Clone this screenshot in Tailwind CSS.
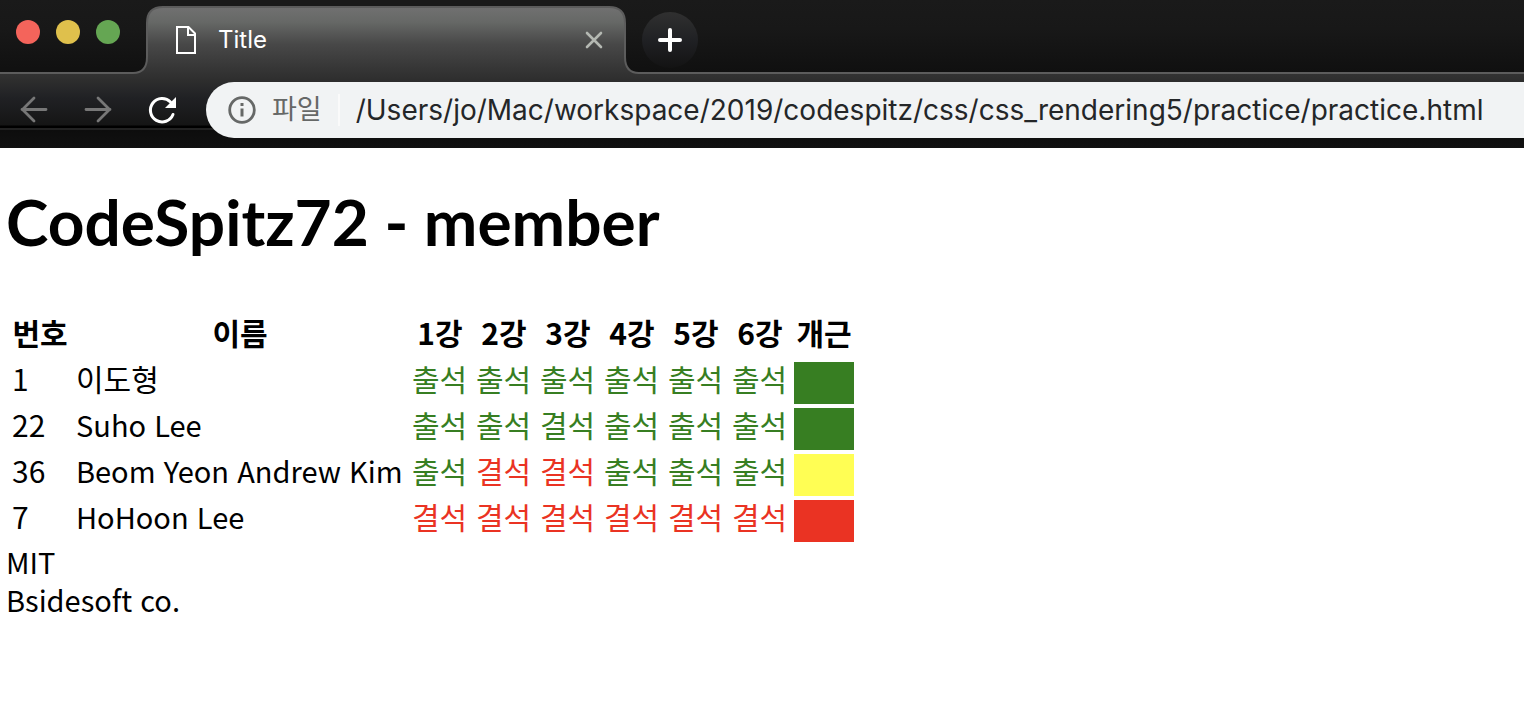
<!DOCTYPE html>
<html lang="ko">
<head>
<meta charset="utf-8">
<meta name="viewport" content="width=device-width, initial-scale=1">
<title>Title</title>
<script src="https://cdn.jsdelivr.net/npm/@tailwindcss/browser@4"></script>
</head>
<body class="min-h-screen overflow-x-hidden bg-white text-black font-['Noto_Sans_CJK_KR','Noto_Sans',sans-serif]">
<header class="relative isolate overflow-hidden bg-[linear-gradient(to_bottom,#707070_8px,#666866_22px,#484848_44px,#363636_68px,#2e2e2e_80px,#202124_98px,#151515_125px,#000_126px,#000_128px,#222_128px,#222_130px,#0d0d0d_130px,#111_148px)] font-[Inter,'Noto_Sans_CJK_KR',sans-serif]">
  <!-- Outline of the tab strip -->
  <div class="absolute inset-x-0 top-0 -z-10 flex h-[74px]" aria-hidden="true">
    <svg class="h-[74px] w-[172px] shrink-0" viewBox="0 0 172 74">
      <defs><linearGradient id="strip" x1="0" y1="0" x2="0" y2="74" gradientUnits="userSpaceOnUse"><stop stop-color="#1a1a1a"/><stop offset=".4" stop-color="#181818"/><stop offset="1" stop-color="#101010"/></linearGradient></defs>
      <path d="M0 0H172V7H163Q147 7 147 23V57Q147 73 133 73H0Z" fill="url(#strip)"/>
      <path d="M0 73H133Q147 73 147 57V23Q147 7 163 7H172" fill="none" stroke="#5c5c5c" stroke-width="2"/>
    </svg>
    <div class="h-2 w-[428px] shrink-0 border-b-2 border-[#5c5c5c] bg-[#1a1a1a]"></div>
    <svg class="h-[74px] w-[50px] shrink-0" viewBox="0 0 50 74">
      <path d="M0 0H50V73H39Q25 73 25 57V23Q25 7 9 7H0Z" fill="url(#strip)"/>
      <path d="M0 7H9Q25 7 25 23V57Q25 73 39 73H50" fill="none" stroke="#5c5c5c" stroke-width="2"/>
    </svg>
    <div class="h-[74px] flex-1 border-b-2 border-[#5c5c5c] bg-[linear-gradient(to_bottom,#1a1a1a,#181818_40%,#101010)]"></div>
  </div>

  <div class="flex h-[74px] items-start">
    <div class="flex w-[148px] shrink-0 gap-4 pt-5 pl-4">
      <button class="size-6 rounded-full bg-[#f4645b]" aria-label="Close window"></button>
      <button class="size-6 rounded-full bg-[#dfc04c]" aria-label="Minimize"></button>
      <button class="size-6 rounded-full bg-[#65a653]" aria-label="Zoom"></button>
    </div>
    <div class="flex w-[478px] shrink-0 items-center pt-5 pr-5 pl-7">
      <svg class="h-10 w-5 shrink-0" viewBox="0 0 20 40" fill="none" stroke="#fff" stroke-width="2"><path d="M1 7H12.500L19 13.500V33H1Z"/><path d="M12 7V15H19"/></svg>
      <span class="ml-[22px] flex-1 text-2xl leading-10 text-white">Title</span>
      <button class="flex size-6 items-center justify-center" aria-label="Close tab">
        <svg class="size-5" viewBox="0 0 20 20" stroke="#b4b8b2" stroke-width="2.600" stroke-linecap="round"><path d="M3 3L17 17M17 3L3 17"/></svg>
      </button>
    </div>
    <button class="mt-3 ml-4 flex size-14 items-center justify-center rounded-full bg-[linear-gradient(to_bottom,#303030,#202124_50%,#131313)]" aria-label="New tab">
      <svg class="size-6" viewBox="0 0 24 24" stroke="#fff" stroke-width="4" stroke-linecap="round"><path d="M12 2V22M2 12H22"/></svg>
    </button>
  </div>

  <div class="flex h-[74px] items-start pt-2">
    <nav class="flex h-14 w-[206px] shrink-0 items-center gap-8 pl-[18px]">
      <button class="size-8" aria-label="Back"><svg class="size-8" viewBox="0 0 32 32" fill="none" stroke="#777" stroke-width="2.800" stroke-linecap="round"><path d="M28 15.500H4M16 4L4.500 15.500L16 27"/></svg></button>
      <button class="size-8" aria-label="Forward"><svg class="size-8" viewBox="0 0 32 32" fill="none" stroke="#777" stroke-width="2.800" stroke-linecap="round"><path d="M4 15.500H28M16 4L27.500 15.500L16 27"/></svg></button>
      <button class="size-8" aria-label="Reload"><svg class="size-8" viewBox="0 0 32 32" fill="none"><path d="M27 20.500A11.700 11.700 0 1 1 24.500 8" stroke="#fff" stroke-width="3" stroke-linecap="round"/><path d="M30 3V14H19Z" fill="#fff"/></svg></button>
    </nav>
    <div class="flex h-14 min-w-0 flex-1 items-center rounded-l-full bg-[#f1f3f4] pl-[22px]">
      <svg class="size-7 shrink-0" viewBox="0 0 28 28" fill="none"><circle cx="14" cy="14" r="12.300" stroke="#666867" stroke-width="2.800"/><path d="M14 12.500V20.500" stroke="#666867" stroke-width="3"/><path d="M14 7V10" stroke="#666867" stroke-width="3"/></svg>
      <label for="address" class="ml-4 shrink-0 text-[27px] leading-8 text-[#666867]">파일</label>
      <span class="ml-4 h-8 w-0.5 shrink-0 bg-[#fafafa]"></span>
      <input id="address" type="text" value="/Users/jo/Mac/workspace/2019/codespitz/css/css_rendering5/practice/practice.html" class="ml-4 h-14 min-w-0 flex-1 bg-transparent text-[28px] text-[#242628] outline-none">
    </div>
  </div>
</header>

<main class="px-1.5 pt-8">
  <h1 class="h-[88px] text-[64px] leading-[84px] font-bold font-[Lato,'Noto_Sans_CJK_KR',sans-serif]">CodeSpitz72 - member</h1>
  <table class="mt-11 border-separate border-spacing-1 text-[30px] leading-8">
    <thead>
      <tr>
        <th class="w-15 px-0.5 pb-2.5">번호</th><th class="w-83 px-0.5 pb-2.5">이름</th>
        <th class="w-15 px-0.5 pb-2.5">1강</th><th class="w-15 px-0.5 pb-2.5">2강</th><th class="w-15 px-0.5 pb-2.5">3강</th><th class="w-15 px-0.5 pb-2.5">4강</th><th class="w-15 px-0.5 pb-2.5">5강</th><th class="w-15 px-0.5 pb-2.5">6강</th>
        <th class="w-15 px-0.5 pb-2.5">개근</th>
      </tr>
    </thead>
    <tbody class="text-[#377e22]">
      <tr>
        <td class="px-0.5 pb-2.5 text-black">1</td><td class="px-0.5 pb-2.5 text-black">이도형</td>
        <td class="px-0.5 pb-2.5">출석</td><td class="px-0.5 pb-2.5">출석</td><td class="px-0.5 pb-2.5">출석</td><td class="px-0.5 pb-2.5">출석</td><td class="px-0.5 pb-2.5">출석</td><td class="px-0.5 pb-2.5">출석</td>
        <td class="bg-[#377e22]"></td>
      </tr>
      <tr>
        <td class="px-0.5 pb-2.5 text-black">22</td><td class="px-0.5 pb-2.5 text-[29px] text-black">Suho Lee</td>
        <td class="px-0.5 pb-2.5">출석</td><td class="px-0.5 pb-2.5">출석</td><td class="px-0.5 pb-2.5">결석</td><td class="px-0.5 pb-2.5">출석</td><td class="px-0.5 pb-2.5">출석</td><td class="px-0.5 pb-2.5">출석</td>
        <td class="bg-[#377e22]"></td>
      </tr>
      <tr>
        <td class="px-0.5 pb-2.5 text-black">36</td><td class="px-0.5 pb-2.5 text-[29px] whitespace-nowrap text-black">Beom Yeon Andrew Kim</td>
        <td class="px-0.5 pb-2.5">출석</td><td class="px-0.5 pb-2.5 text-[#ea3323]">결석</td><td class="px-0.5 pb-2.5 text-[#ea3323]">결석</td><td class="px-0.5 pb-2.5">출석</td><td class="px-0.5 pb-2.5">출석</td><td class="px-0.5 pb-2.5">출석</td>
        <td class="bg-[#fffe54]"></td>
      </tr>
      <tr class="text-[#ea3323]">
        <td class="px-0.5 pb-2.5 text-black">7</td><td class="px-0.5 pb-2.5 text-[29px] text-black">HoHoon Lee</td>
        <td class="px-0.5 pb-2.5">결석</td><td class="px-0.5 pb-2.5">결석</td><td class="px-0.5 pb-2.5">결석</td><td class="px-0.5 pb-2.5">결석</td><td class="px-0.5 pb-2.5">결석</td><td class="px-0.5 pb-2.5">결석</td>
        <td class="bg-[#ea3323]"></td>
      </tr>
    </tbody>
  </table>
  <footer class="-mt-1 text-[29px] leading-[38px]">
    <p>MIT</p>
    <p>Bsidesoft co.</p>
  </footer>
</main>
</body>
</html>
